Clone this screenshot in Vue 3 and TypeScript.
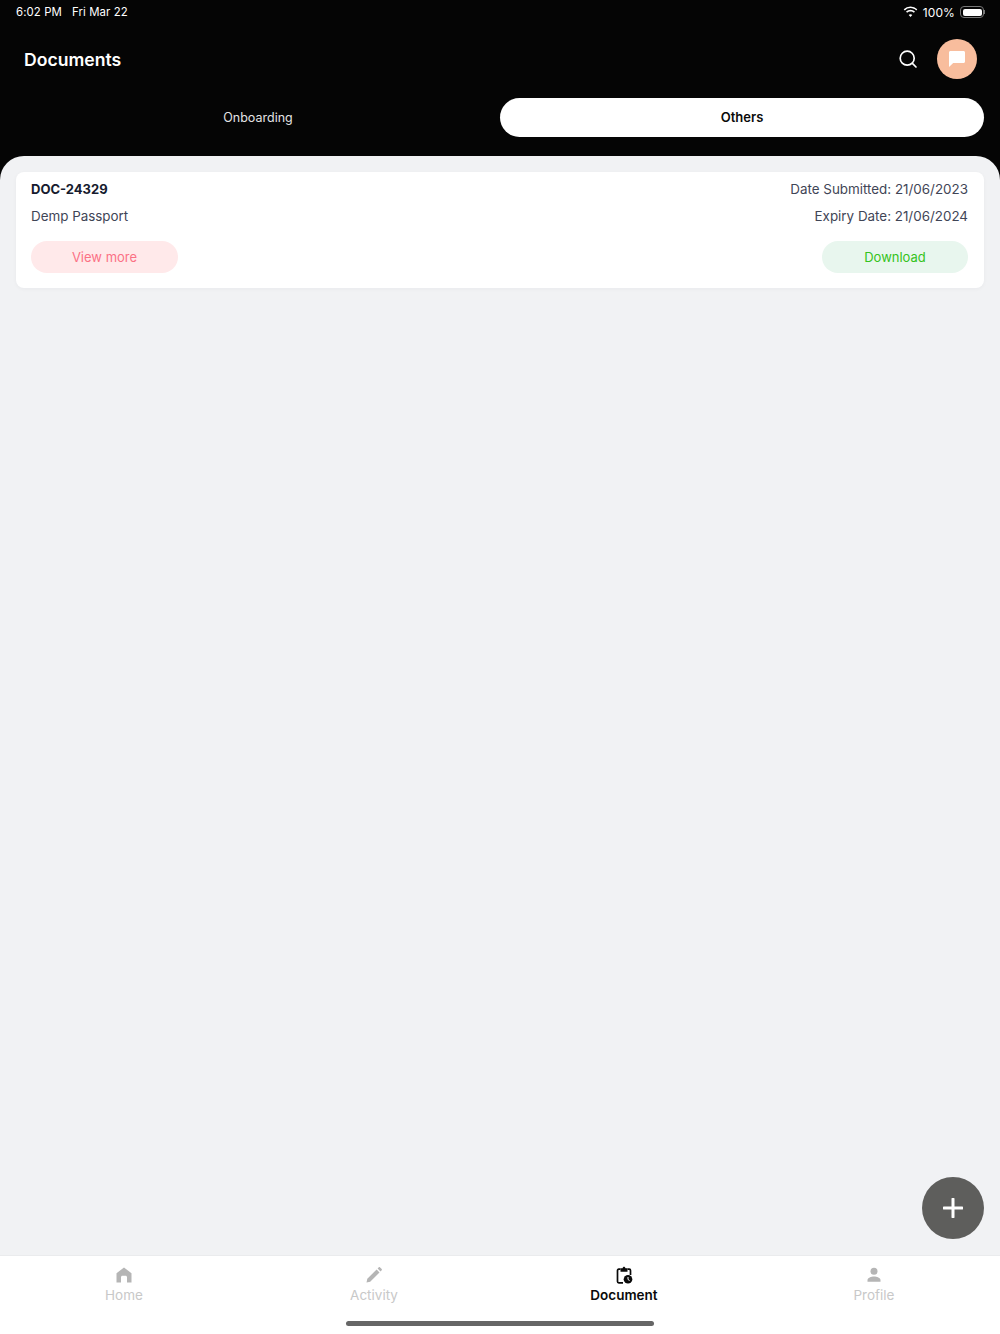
<template>
  <div class="page">
    <header class="top">
      <div class="status-bar">
        <div class="status-left">
          <span>6:02 PM</span>
          <span>Fri Mar 22</span>
        </div>
        <div class="status-right">
          <svg class="wifi" width="15" height="12" viewBox="0 0 15 12">
            <path d="M7.5 2.1c2.2 0 4.2.9 5.7 2.3l1.1-1.2A9.9 9.9 0 0 0 7.5.4 9.9 9.9 0 0 0 .7 3.2l1.1 1.2a8.2 8.2 0 0 1 5.7-2.3z" fill="#fff" />
            <path d="M7.5 5.4c1.3 0 2.5.5 3.4 1.3L12 5.5a6.7 6.7 0 0 0-9 0l1.1 1.2c.9-.8 2.1-1.3 3.4-1.3z" fill="#fff" />
            <path d="M7.5 8.3c-.7 0-1.3.3-1.8.7l1.800 2 1.800-2c-.5-.4-1.100-.7-1.800-.7z" fill="#fff" />
          </svg>
          <span class="battery-text">100%</span>
          <div class="battery">
            <div class="battery-fill"></div>
          </div>
          <div class="battery-cap"></div>
        </div>
      </div>

      <div class="title-row">
        <h1>Documents</h1>
        <div class="title-actions">
          <svg width="20" height="20" viewBox="0 0 20 20" fill="none" stroke="#fff" stroke-width="1.7" stroke-linecap="round">
            <circle cx="9.2" cy="9.2" r="7" />
            <path d="M14.4 14.4 18 18" />
          </svg>
          <button class="chat-btn">
            <svg width="18" height="18" viewBox="0 0 18 18">
              <path d="M2.5 1h13C16.4 1 17 1.7 17 2.5v9.100c0 .9-.6 1.500-1.500 1.500H5.200L1 17V2.500C1 1.700 1.600 1 2.500 1z" fill="#fff" />
            </svg>
          </button>
        </div>
      </div>

      <div class="tabs">
        <button v-for="tab in tabs" :key="tab" class="tab" :class="{ active: tab === activeTab }" @click="activeTab = tab">
          {{ tab }}
        </button>
      </div>
    </header>

    <main class="content">
      <div v-for="doc in documents" :key="doc.id" class="card">
        <div class="card-row">
          <span class="doc-id">{{ doc.id }}</span>
          <span>Date Submitted: {{ doc.submitted }}</span>
        </div>
        <div class="card-row">
          <span>{{ doc.name }}</span>
          <span>Expiry Date: {{ doc.expiry }}</span>
        </div>
        <div class="card-actions">
          <button class="pill pill-red">View more</button>
          <button class="pill pill-green">Download</button>
        </div>
      </div>

      <button class="fab">
        <svg width="20" height="20" viewBox="0 0 20 20">
          <path d="M10 1v18M1 10h18" stroke="#fff" stroke-width="3" stroke-linecap="round" />
        </svg>
      </button>
    </main>

    <nav class="bottom-nav">
      <div v-for="item in navItems" :key="item.label" class="nav-item" :class="{ current: item.label === 'Document' }">
        <svg width="18" height="18" viewBox="0 0 18 18">
          <path v-if="item.label === 'Home'" d="M9 1.500 16.500 7.200V16.500H12V11.300C12 10.400 11.400 9.800 10.500 9.800H7.500C6.600 9.800 6 10.400 6 11.300V16.500H1.500V7.200Z" fill="#b5b5b5" />
          <path v-else-if="item.label === 'Activity'" d="M1.500 16.500 2.300 12.800 11.600 3.500 14.500 6.400 5.200 15.700ZM12.600 2.500 13.800 1.300C14.100 1 14.600 1 14.900 1.300L16.700 3.100C17 3.400 17 3.900 16.700 4.200L15.500 5.400Z" fill="#b5b5b5" />
          <g v-else-if="item.label === 'Document'">
            <path d="M5.500 3.200H3.800C3 3.200 2.500 3.800 2.500 4.500V15.500C2.500 16.300 3 16.800 3.800 16.800H8" fill="none" stroke="#0a0a0a" stroke-width="1.700" />
            <path d="M12.500 3.200H14.200C15 3.200 15.500 3.800 15.500 4.500V9" fill="none" stroke="#0a0a0a" stroke-width="1.700" />
            <path d="M5.500 2.300H7.500C7.700 1.400 8.300 .8 9 .8S10.300 1.400 10.500 2.300H12.500V5.700H5.500Z" fill="#0a0a0a" />
            <circle cx="13" cy="13.300" r="4.300" fill="#0a0a0a" />
            <path d="M13 11v2.500l1.600 1" fill="none" stroke="#fff" stroke-width="1" />
          </g>
          <g v-else>
            <circle cx="9" cy="5.200" r="3.500" fill="#b5b5b5" />
            <path d="M2.500 15.800V14C2.500 11.700 6.200 10.400 9 10.400S15.500 11.700 15.500 14V15.800Z" fill="#b5b5b5" />
          </g>
        </svg>
        <span>{{ item.label }}</span>
      </div>
      <div class="home-indicator"></div>
    </nav>
  </div>
</template>

<script setup lang="ts">
import { ref } from 'vue'

interface DocumentItem {
  id: string
  name: string
  submitted: string
  expiry: string
}

const tabs = ['Onboarding', 'Others']
const activeTab = ref('Others')

const documents: DocumentItem[] = [
  { id: 'DOC-24329', name: 'Demp Passport', submitted: '21/06/2023', expiry: '21/06/2024' }
]

const navItems = [{ label: 'Home' }, { label: 'Activity' }, { label: 'Document' }, { label: 'Profile' }]
</script>

<style>
html,
body {
  margin: 0;
  background: #f1f2f4;
}
</style>

<style scoped>
.page {
  width: 1000px;
  height: 1334px;
  display: flex;
  flex-direction: column;
  background: #050505;
  font-family: Inter, 'Noto Sans', sans-serif;
  overflow: hidden;
}

button {
  font-family: inherit;
  border: none;
  cursor: pointer;
}

.top {
  height: 156px;
  flex: none;
  padding: 0 16px;
  box-sizing: border-box;
  color: #fff;
}

.status-bar {
  height: 24px;
  display: flex;
  align-items: center;
  justify-content: space-between;
  font-size: 11.4px;
  letter-spacing: 0.1px;
}

.status-left {
  display: flex;
  gap: 10px;
}

.status-right {
  display: flex;
  align-items: center;
  gap: 3px;
}

.wifi {
  margin-right: 2px;
}

.battery-text {
  font-size: 12px;
}

.battery {
  width: 24px;
  height: 12px;
  margin-left: 2px;
  padding: 1.5px;
  box-sizing: border-box;
  border: 1px solid #777;
  border-radius: 4px;
}

.battery-fill {
  height: 100%;
  background: #fff;
  border-radius: 2px;
}

.battery-cap {
  width: 1px;
  height: 4px;
  margin-left: -3px;
  margin-right: -1px;
  background: #777;
}

.title-row {
  height: 40px;
  margin-top: 15px;
  padding: 0 7px 0 8px;
  display: flex;
  align-items: center;
  justify-content: space-between;
}

h1 {
  margin: 0;
  font-size: 17.6px;
  font-weight: 600;
}

.title-actions {
  display: flex;
  align-items: center;
  gap: 19px;
}

.chat-btn {
  width: 40px;
  height: 40px;
  padding: 0;
  display: flex;
  align-items: center;
  justify-content: center;
  border-radius: 50%;
  background: #f8bd9d;
}

.tabs {
  margin-top: 19px;
  display: grid;
  grid-template-columns: 1fr 1fr;
}

.tab {
  height: 39px;
  padding: 0;
  border-radius: 20px;
  background: transparent;
  color: #e4e4e4;
  font-size: 12.5px;
}

.tab.active {
  padding-bottom: 1px;
  background: #fff;
  color: #0a0a0a;
  font-size: 13px;
  font-weight: 600;
}

.content {
  flex: 1;
  position: relative;
  padding: 16px;
  background: #f1f2f4;
  border-radius: 24px 24px 0 0;
}

.card {
  height: 116px;
  padding: 3px 16px 0 15px;
  box-sizing: border-box;
  background: #fff;
  border-radius: 8px;
  box-shadow: 0 1px 4px rgba(20, 30, 50, 0.04);
  color: #3f4556;
  font-size: 13.4px;
}

.card-row {
  height: 27px;
  display: flex;
  align-items: center;
  justify-content: space-between;
}

.doc-id {
  color: #161b2e;
  font-size: 13px;
  font-weight: 700;
}

.card-actions {
  margin-top: 12px;
  display: flex;
  justify-content: space-between;
}

.pill {
  width: 147px;
  height: 32px;
  padding: 0;
  border-radius: 16px;
  font-size: 13px;
}

.pill-red {
  background: #ffe9ea;
  color: #fb7185;
}

.pill-green {
  width: 146px;
  background: #e8f6ee;
  color: #34c320;
}

.fab {
  position: absolute;
  right: 16px;
  bottom: 16px;
  width: 62px;
  height: 62px;
  padding: 0;
  display: flex;
  align-items: center;
  justify-content: center;
  border-radius: 50%;
  background: #5e5e5c;
}

.bottom-nav {
  height: 79px;
  flex: none;
  position: relative;
  display: grid;
  grid-template-columns: repeat(4, 248px);
  gap: 2px;
  box-sizing: border-box;
  padding-top: 10px;
  background: #fff;
  border-top: 1px solid #eaebed;
}

.nav-item {
  display: flex;
  flex-direction: column;
  align-items: center;
  gap: 2px;
  color: #c8c8c8;
  font-size: 13.5px;
  line-height: 18px;
}

.nav-item.current {
  color: #0a0a0a;
  font-weight: 600;
}

.home-indicator {
  position: absolute;
  left: 346px;
  bottom: 8px;
  width: 308px;
  height: 5px;
  border-radius: 3px;
  background: #666;
}
</style>
